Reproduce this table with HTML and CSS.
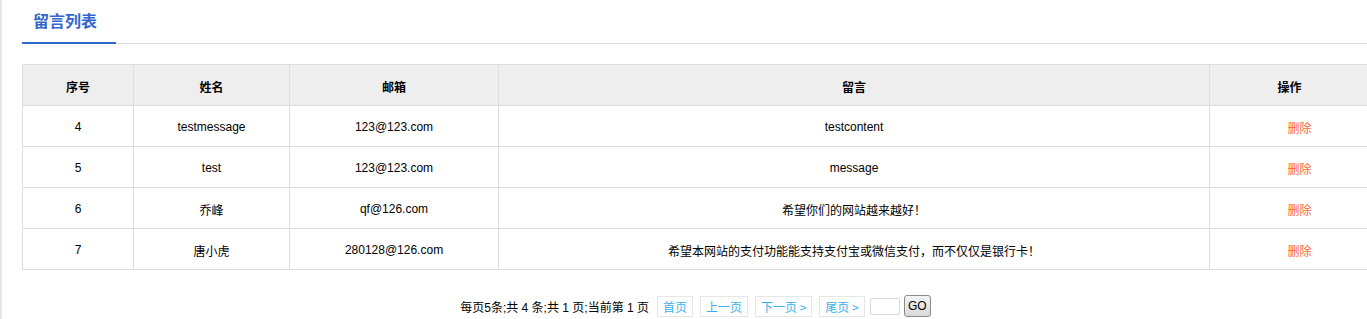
FILE: index.html
```html
<!DOCTYPE html>
<html lang="zh-CN">
<head>
<meta charset="utf-8">
<title>留言列表</title>
<link rel="stylesheet" href="styles.css">
</head>
<body>
<div class="page">
  <div class="tabs">
    <div class="tab">留言列表</div>
  </div>
  <table class="grid">
    <colgroup>
      <col class="c1"><col class="c2"><col class="c3"><col class="c4"><col class="c5">
    </colgroup>
    <thead>
      <tr><th>序号</th><th>姓名</th><th>邮箱</th><th>留言</th><th>操作</th></tr>
    </thead>
    <tbody>
      <tr><td>4</td><td>testmessage</td><td>123@123.com</td><td>testcontent</td><td class="op"><a class="del" href="#">删除</a></td></tr>
      <tr><td>5</td><td>test</td><td>123@123.com</td><td>message</td><td class="op"><a class="del" href="#">删除</a></td></tr>
      <tr><td>6</td><td>乔峰</td><td>qf@126.com</td><td>希望你们的网站越来越好！</td><td class="op"><a class="del" href="#">删除</a></td></tr>
      <tr><td>7</td><td>唐小虎</td><td>280128@126.com</td><td>希望本网站的支付功能能支持支付宝或微信支付，而不仅仅是银行卡！</td><td class="op"><a class="del" href="#">删除</a></td></tr>
    </tbody>
  </table>
  <div class="pager">
    <span class="info">每页5条;共 4 条;共 1 页;当前第 1 页</span>
    <a class="pbtn" href="#">首页</a>
    <a class="pbtn" href="#">上一页</a>
    <a class="pbtn" href="#">下一页 &gt;</a>
    <a class="pbtn" href="#">尾页 &gt;</a>
    <input class="jump" type="text">
    <button class="go" type="button">GO</button>
  </div>
</div>
</body>
</html>
```
FILE: styles.css
```css
html {
  overflow: hidden;
}
body {
  margin: 0;
  background: #fff;
  border-left: 2px solid #e6e6e6;
  font-family: "Liberation Sans", Arial, "Noto Sans CJK SC", sans-serif;
  font-size: 12px;
  color: #000;
  min-height: 319px;
  box-sizing: border-box;
}
.page {
  margin-left: 20px;
  width: 1347px;
}
.tabs {
  height: 43px;
  border-bottom: 1px solid #dddddd;
  display: flex;
  align-items: flex-end;
}
.tab {
  box-sizing: border-box;
  width: 94px;
  height: 45px;
  margin-bottom: -1px;
  padding-left: 11px;
  line-height: 43px;
  border-bottom: 2px solid #3366cc;
  color: #3366cc;
  font-size: 16px;
  font-weight: bold;
  font-family: "Noto Sans CJK SC", sans-serif;
}
.grid {
  margin-top: 20px;
  width: 1347px;
  border-collapse: collapse;
  table-layout: fixed;
}
.c1 { width: 111px; }
.c2 { width: 156px; }
.c3 { width: 209px; }
.c4 { width: 711px; }
.c5 { width: 160px; }
.grid th,
.grid td {
  border: 1px solid #dddddd;
  height: 41px;
  box-sizing: border-box;
  padding: 2px 0 0;
  text-align: center;
  vertical-align: middle;
  font-size: 12px;
}
.grid th {
  background: #eeeeee;
  font-weight: bold;
}
.grid td.op {
  padding-left: 20px;
}
.del {
  color: #ff6633;
  text-decoration: none;
}
.pager {
  margin-top: 25px;
  display: flex;
  align-items: center;
  justify-content: center;
  gap: 7px;
  height: 22px;
}
.info {
  margin-right: 1px;
}
.pbtn {
  box-sizing: border-box;
  height: 21px;
  line-height: 19px;
  padding: 0 5px;
  border: 1px solid #e6e6e6;
  color: #3ab0ee;
  text-decoration: none;
  font-family: "Noto Sans CJK SC", sans-serif;
  font-size: 12px;
}
.jump {
  box-sizing: border-box;
  width: 30px;
  height: 17px;
  margin: 0 -4px 0 -2px;
  border: 1px solid #d8d8d8;
  border-radius: 2px;
  padding: 0;
}
.go {
  box-sizing: border-box;
  width: 27px;
  height: 22px;
  margin-left: 1px;
  padding: 0;
  border: 1px solid #8a8a8a;
  border-radius: 3px;
  background: linear-gradient(#f4f4f4, #d9d9d9);
  font-family: "Liberation Sans", Arial, sans-serif;
  font-size: 12px;
  color: #000;
}
```
